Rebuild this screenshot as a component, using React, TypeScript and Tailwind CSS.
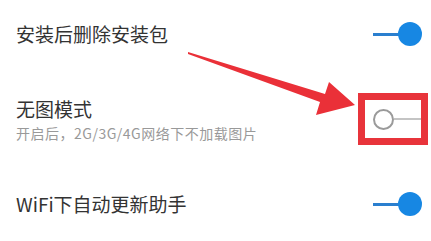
const Toggle = ({ on }: { on: boolean }) =>
  on ? (
    <div className="flex items-center w-[49px]">
      <div className="h-[3px] w-[27px] bg-[#2a7fcf]" />
      <div className="w-[24px] h-[24px] -ml-[2px] rounded-full bg-[#1787e3]" />
    </div>
  ) : (
    <div className="flex items-center w-[49px]">
      <div className="w-[21px] h-[21px] rounded-full border-2 border-[#9a9a9a] bg-white" />
      <div className="h-[2px] w-[28px] bg-[#c4c4c4]" />
    </div>
  )

export default function App() {
  return (
    <div
      className="relative w-[431px] h-[241px] bg-white overflow-hidden text-[#333]"
      style={{ fontFamily: '"Noto Sans CJK SC", "Noto Sans", sans-serif' }}
    >
      <div className="flex items-center justify-between h-[68px] pl-4 pr-[9px]">
        <span className="text-[19px] leading-6">安装后删除安装包</span>
        <Toggle on />
      </div>
      <div className="flex items-center justify-between h-[102px] pl-4 pr-[9px]">
        <div className="flex flex-col pt-[2px]">
          <span className="text-[19px] leading-6">无图模式</span>
          <span className="text-[14px] leading-5 mt-[2px] tracking-[0.5px] text-[#999]">开启后，2G/3G/4G网络下不加载图片</span>
        </div>
        <Toggle on={false} />
      </div>
      <div className="flex items-center justify-between h-[68px] pl-4 pr-[9px]">
        <span className="text-[19px] leading-6">WiFi下自动更新助手</span>
        <Toggle on />
      </div>

      {/* highlight box */}
      <div className="absolute left-[358px] top-[93px] w-[70px] h-[52px] border-[7px] border-[#e8343b]" />

      {/* arrow */}
      <svg className="absolute inset-0" width="431" height="241" viewBox="0 0 431 241">
        <polygon
          points="188,52 325,94 329,82 355,105 316,115 320,102 188,54"
          fill="#ea3038"
        />
      </svg>
    </div>
  )
}
